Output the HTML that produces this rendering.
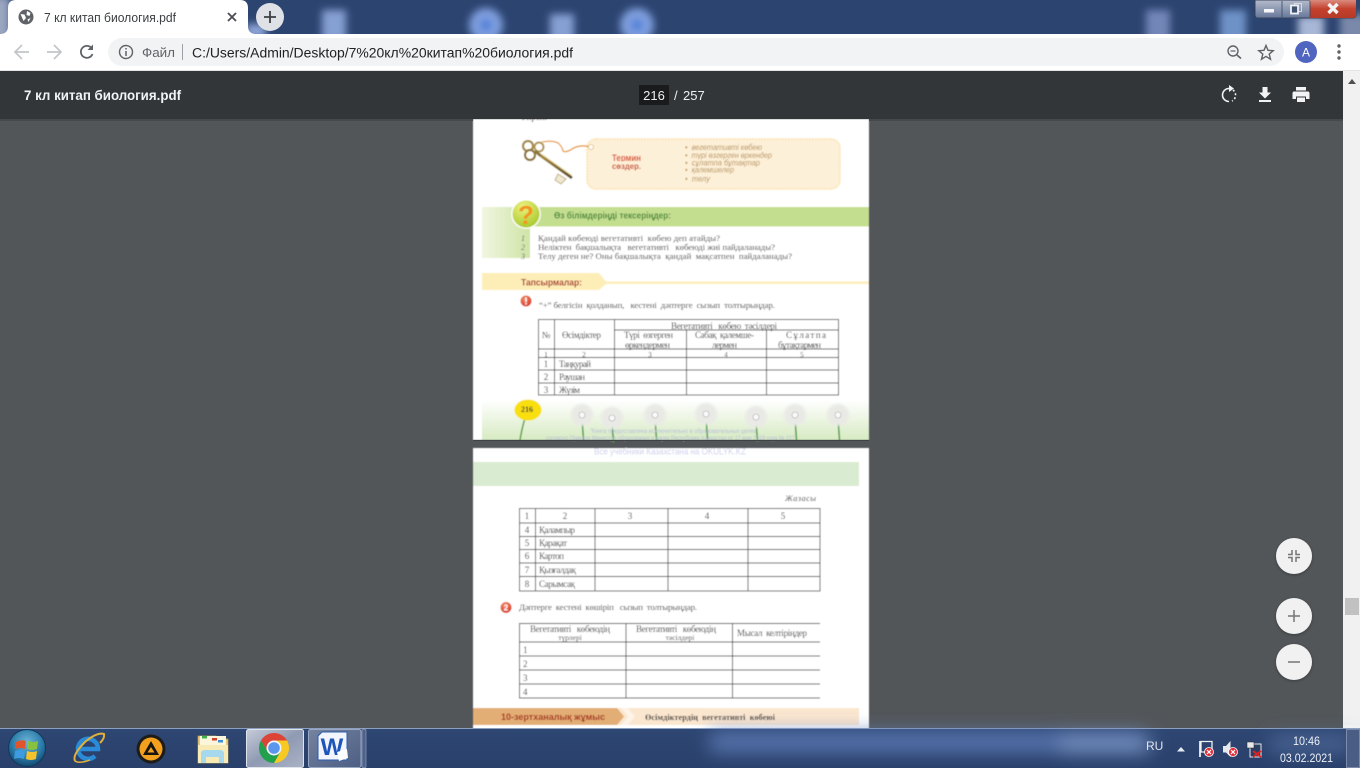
<!DOCTYPE html>
<html><head><meta charset="utf-8"><title>7 кл китап биология.pdf</title>
<style>
html,body{margin:0;padding:0;width:1360px;height:768px;overflow:hidden;background:#525659}
svg{display:block;position:absolute;left:0;top:0}
text{white-space:pre}
.ui{font-family:"Liberation Sans","DejaVu Sans",sans-serif}
.sf{font-family:"Liberation Serif","DejaVu Serif",serif;fill:#333}
.sn{font-family:"Liberation Sans","DejaVu Sans",sans-serif}
</style></head><body>
<svg width="1360" height="768" viewBox="0 0 1360 768" xmlns="http://www.w3.org/2000/svg">
<defs>
<filter id="b1" x="-5%" y="-5%" width="110%" height="110%"><feGaussianBlur stdDeviation="0.45"/></filter>
<filter id="b2" x="-30%" y="-30%" width="160%" height="160%"><feGaussianBlur stdDeviation="1.2"/></filter>
<filter id="b5" x="-30%" y="-30%" width="160%" height="160%"><feGaussianBlur stdDeviation="4"/></filter>
<filter id="b12" x="-30%" y="-100%" width="160%" height="300%"><feGaussianBlur stdDeviation="9"/></filter>
<filter id="sh" x="-30%" y="-30%" width="160%" height="160%"><feDropShadow dx="0" dy="1" stdDeviation="1.5" flood-color="#000" flood-opacity=".3"/></filter>
<linearGradient id="gl" x1="0" x2="1" y1="0" y2="0"><stop offset="0" stop-color="#f0f6e0"/><stop offset="1" stop-color="#cfe4a6"/></linearGradient>
<linearGradient id="gb" x1="0" x2="0" y1="0" y2="1"><stop offset="0" stop-color="#fff"/><stop offset="1" stop-color="#d6eac2"/></linearGradient>
<linearGradient id="tb" x1="0" x2="0" y1="0" y2="1"><stop offset="0" stop-color="#2e4672"/><stop offset="1" stop-color="#29406b"/></linearGradient>
<linearGradient id="btn" x1="0" x2="1" y1="0" y2="1"><stop offset="0" stop-color="#c5cbd8"/><stop offset=".5" stop-color="#8f9ab3"/><stop offset="1" stop-color="#aab2c5"/></linearGradient>
<linearGradient id="btn2" x1="0" x2="1" y1="0" y2="1"><stop offset="0" stop-color="#75839f"/><stop offset="1" stop-color="#4c5e84"/></linearGradient>
<linearGradient id="red" x1="0" x2="0" y1="0" y2="1"><stop offset="0" stop-color="#d98a7e"/><stop offset=".5" stop-color="#c4402c"/><stop offset="1" stop-color="#b53a28"/></linearGradient>
<linearGradient id="wc" x1="0" x2="0" y1="0" y2="1"><stop offset="0" stop-color="#b4bccb"/><stop offset="1" stop-color="#66779a"/></linearGradient>
<linearGradient id="kg" x1="0" x2="1" y1="0" y2="1"><stop offset="0" stop-color="#a8893c"/><stop offset="1" stop-color="#5c4a1e"/></linearGradient>
<radialGradient id="q" cx=".4" cy=".25" r=".85"><stop offset="0" stop-color="#eef27e"/><stop offset="1" stop-color="#a2c524"/></radialGradient>
<radialGradient id="rd" cx=".4" cy=".3" r=".8"><stop offset="0" stop-color="#f58c6a"/><stop offset="1" stop-color="#d7301c"/></radialGradient>
<radialGradient id="orb" cx=".5" cy=".35" r=".7"><stop offset="0" stop-color="#6fb5d8"/><stop offset=".6" stop-color="#2a7aa8"/><stop offset="1" stop-color="#0e3f63"/></radialGradient>
<g id="dand"><path d="M0 3 L1.500 25" stroke="#4c9a3c" stroke-width="1.500" fill="none"/><circle r="11" fill="#e9e9e6" filter="url(#b2)"/><circle r="3" fill="#fafafa" stroke="#a8a8a8" stroke-width=".6"/></g>
</defs>

<!-- viewer background -->
<rect width="1360" height="768" fill="#525659"/>

<!-- desktop title strip -->
<rect width="1360" height="34" fill="#2c4470"/>
<g filter="url(#b5)">
<rect x="322" y="10" width="24" height="32" fill="#86a0d4"/>
<circle cx="486" cy="25" r="17" fill="#7f9fde"/>
<circle cx="486" cy="25" r="6" fill="#4d7fd8"/>
<rect x="550" y="14" width="24" height="28" fill="#86a0d4"/>
<circle cx="637" cy="25" r="17" fill="#7f9fde"/>
<circle cx="637" cy="25" r="6" fill="#4d7fd8"/>
<rect x="1146" y="10" width="24" height="32" fill="#7386b8"/>
<rect x="1220" y="10" width="26" height="32" fill="#6e92c8"/>
<rect x="1298" y="16" width="26" height="28" fill="#a9b7d6"/>
<rect x="1340" y="14" width="30" height="30" fill="#7a89aa"/>
<rect x="-10" y="-4" width="20" height="44" fill="#9aa6c0"/>
<rect x="246" y="24" width="20" height="14" fill="#8ea6d8"/>
</g>

<!-- window controls -->
<path d="M1255 0V15q0 3 3 3H1353q3 0 3-3V0Z" fill="url(#wc)" stroke="#39445c" stroke-width="1"/>
<path d="M1310 0H1356V15q0 3-3 3H1310Z" fill="url(#red)"/>
<path d="M1282 1V17M1310 1V17" stroke="#3a4760" stroke-width=".8"/>
<rect x="1264" y="9" width="10" height="3.500" fill="#f4f6fa"/>
<rect x="1294.500" y="3.500" width="7" height="8" fill="none" stroke="#d6dbe4" stroke-width="1"/>
<rect x="1291" y="5.500" width="7" height="8" fill="#3f4f6e" stroke="#eef0f4" stroke-width="1.800"/>
<path d="M1328.500 4L1337.500 13M1337.500 4L1328.500 13" stroke="#f2f2f2" stroke-width="3.400"/>

<!-- tab -->
<path d="M0 34Q8 34 8 26V8Q8 0 16 0H240Q248 0 248 8V26Q248 34 256 34Z" fill="#fff"/>
<circle cx="26" cy="17" r="7.500" fill="#5f6368"/>
<path d="M20.500 14l4 .5 1.500 3.500-2.500 3zM27 11l3.500 2-1 3-3-1zM27.500 19.500l3-1.500-2 4z" fill="#fff"/>
<text class="ui" x="44" y="22" font-size="12.500" fill="#3c4043" textLength="132" lengthAdjust="spacingAndGlyphs">7 кл китап биология.pdf</text>
<path d="M228 13L236 21M236 13L228 21" stroke="#4a4d51" stroke-width="1.800"/>
<circle cx="270" cy="17" r="14" fill="#dee1e6"/>
<path d="M270 11V23M264 17H276" stroke="#3c4043" stroke-width="1.800"/>

<!-- toolbar -->
<rect y="34" width="1360" height="37" fill="#fff"/>
<path d="M22 45L15 52L22 59M15 52H29" stroke="#c3c5c8" stroke-width="1.700" fill="none"/>
<path d="M54 45L61 52L54 59M47 52H61" stroke="#c3c5c8" stroke-width="1.700" fill="none"/>
<path d="M91.500 48A6 6 0 1 0 92.500 54" stroke="#5f6368" stroke-width="1.800" fill="none"/>
<path d="M93 44.500V50H87.500Z" fill="#5f6368"/>
<rect x="108" y="38" width="1176" height="28" rx="14" fill="#f1f3f4"/>
<circle cx="126" cy="52" r="6.500" fill="none" stroke="#5f6368" stroke-width="1.400"/>
<path d="M126 51V56M126 48V49.500" stroke="#5f6368" stroke-width="1.500"/>
<text class="ui" x="142" y="57" font-size="12.500" fill="#5f6368" textLength="33" lengthAdjust="spacingAndGlyphs">Файл</text>
<rect x="182" y="44" width="1" height="16" fill="#9aa0a6"/>
<text class="ui" x="192" y="57.500" font-size="13.500" fill="#202124" textLength="381" lengthAdjust="spacingAndGlyphs">C:/Users/Admin/Desktop/7%20кл%20китап%20биология.pdf</text>
<circle cx="1233" cy="51" r="5" fill="none" stroke="#5f6368" stroke-width="1.400"/>
<path d="M1230.500 51H1235.500" stroke="#5f6368" stroke-width="1.200"/>
<path d="M1237 55L1241 58.500" stroke="#5f6368" stroke-width="1.600"/>
<path d="M1266 45.500l2 4.800 5.200.4-4 3.400 1.300 5.100-4.500-2.800-4.500 2.800 1.300-5.100-4-3.400 5.200-.4z" fill="none" stroke="#5f6368" stroke-width="1.400"/>
<circle cx="1306" cy="52" r="11" fill="#5065c0"/>
<text class="ui" x="1306" y="56.500" font-size="12" fill="#fff" text-anchor="middle">A</text>
<circle cx="1339" cy="46" r="1.700" fill="#5f6368"/><circle cx="1339" cy="52" r="1.700" fill="#5f6368"/><circle cx="1339" cy="58" r="1.700" fill="#5f6368"/>
<rect y="70" width="1360" height="1" fill="#e4e4e4"/>

<!-- scrollbar -->
<rect x="1343" y="71" width="17" height="658" fill="#f1f1f1"/>
<path d="M1348 84L1352 79L1356 84Z" fill="#505050"/>
<rect x="1345" y="598" width="14" height="17" fill="#c1c1c1"/>

<!-- PAGE 1 -->
<g filter="url(#b1)">
<rect x="473" y="119" width="396" height="321" fill="#fff"/>
<text class="sf" x="520" y="120" font-size="9" fill="#777">Үйрен.</text>
<!-- box -->
<rect x="587" y="139" width="253" height="50" rx="9" fill="#fdf0d8" stroke="#fce4b4" stroke-width="1.800" stroke-dasharray="2 1"/>
<!-- key -->
<path d="M542 142Q552 140 558 143Q562 146 563 151Q566 153 572 149Q580 144 590 147" stroke="#e9a24a" stroke-width="1.400" fill="none"/>
<circle cx="591" cy="147" r="2.500" fill="#fff" stroke="#e3b56c" stroke-width=".8"/>
<path d="M541 156L572 178" stroke="url(#kg)" stroke-width="2.800"/>
<path d="M542 154.500L572 175.500" stroke="#e7d48e" stroke-width=".8"/>
<circle cx="528" cy="146" r="5" fill="#fff" stroke="#a4883e" stroke-width="2.200"/>
<circle cx="539" cy="147" r="4.500" fill="#fff" stroke="#b0934a" stroke-width="2"/>
<circle cx="530" cy="155" r="5" fill="#fff" stroke="#8c7435" stroke-width="2.200"/>
<path d="M535 151L541 156" stroke="#8c7435" stroke-width="3"/>
<path d="M558 174L566 179L561 184L555 180Z" fill="#efe8d2" stroke="#c2b282" stroke-width="1"/>
<text class="ui" x="612" y="161" font-size="9" font-weight="700" fill="#d94a2b" textLength="29" lengthAdjust="spacingAndGlyphs">Термин</text>
<text class="ui" x="612" y="169" font-size="8.500" font-weight="700" fill="#c9492c" textLength="29" lengthAdjust="spacingAndGlyphs">сөздер.</text>
<rect x="610" y="161.500" width="34" height="2.200" fill="#fdf0d8"/>
<g class="ui" font-size="8" font-style="italic" fill="#b8935a">
<text x="685" y="150" textLength="77" lengthAdjust="spacingAndGlyphs">•  вегетативті көбею</text>
<text x="685" y="158" textLength="87" lengthAdjust="spacingAndGlyphs">•  түрі өзгерген өркендер</text>
<text x="685" y="165.500" textLength="75" lengthAdjust="spacingAndGlyphs">•  сұлатпа бұтақтар</text>
<text x="685" y="172.500" textLength="49" lengthAdjust="spacingAndGlyphs">•  қалемшелер</text>
<text x="685" y="181.500" textLength="25" lengthAdjust="spacingAndGlyphs">•  телу</text>
</g>
<!-- check section -->
<rect x="482" y="207" width="48" height="51" fill="url(#gl)"/>
<rect x="530" y="207" width="339" height="19.500" fill="#c4de90"/>
<circle cx="526" cy="214" r="15" fill="#fff" opacity=".85"/>
<circle cx="526" cy="214" r="13.500" fill="url(#q)"/>
<text class="ui" x="526" y="224" font-size="26" font-weight="700" fill="#f2941c" text-anchor="middle">?</text>
<text class="ui" x="554" y="218.500" font-size="8.800" font-weight="700" fill="#4a8a3a" textLength="117" lengthAdjust="spacingAndGlyphs">Өз білімдеріңді тексеріңдер:</text>
<g class="sf" font-size="8" font-style="italic"><text x="521" y="241" fill="#666">1</text><text x="521" y="250" fill="#666">2</text><text x="521" y="259" fill="#666">3</text></g>
<g class="sf" font-size="8.800">
<text x="538" y="241" textLength="182" lengthAdjust="spacing">Қандай көбеюді вегетативті  көбею деп атайды?</text>
<text x="538" y="250" textLength="237" lengthAdjust="spacing">Неліктен  бақшалықта   вегетативті   көбеюді жиі пайдаланады?</text>
<text x="538" y="259" textLength="254" lengthAdjust="spacing">Телу деген не? Оны бақшалықта  қандай  мақсатпен  пайдаланады?</text>
</g>
<!-- tasks -->
<path d="M482 273H599L606 281.500H869V284H606L599 290H482Z" fill="#fdeeb8"/>
<text class="ui" x="521" y="285.500" font-size="9.200" font-weight="700" fill="#a92d20" textLength="61" lengthAdjust="spacingAndGlyphs">Тапсырмалар:</text>
<circle cx="526" cy="301" r="5.500" fill="url(#rd)"/>
<rect x="525.200" y="297.500" width="1.600" height="4.500" fill="#fff"/><rect x="525.200" y="303" width="1.600" height="1.500" fill="#fff"/>
<text class="sf" x="539" y="308" font-size="8.800" textLength="236" lengthAdjust="spacing">“+” белгісін  қолданып,   кестені  дәптерге  сызып  толтырыңдар.</text>
<!-- table 1 -->
<g fill="none" stroke="#444" stroke-width=".9">
<rect x="538.500" y="319.500" width="300" height="75.500"/>
<path d="M554.500 319.500V395M614.500 319.500V395M686.500 330V395M766.500 330V395M614.500 330H838.500M538.500 349H838.500M538.500 357.500H838.500M538.500 370H838.500M538.500 383H838.500"/>
</g>
<g class="sf" font-size="9">
<text x="546" y="338" text-anchor="middle">№</text>
<text x="562" y="338" textLength="39" lengthAdjust="spacing">Өсімдіктер</text>
<text x="671" y="329" textLength="106" lengthAdjust="spacing">Вегетативті   көбею  тәсілдері</text>
<text x="624" y="338" textLength="49" lengthAdjust="spacing">Түрі  өзгерген</text>
<text x="625" y="348" textLength="45" lengthAdjust="spacing">өркендермен</text>
<text x="695" y="338" textLength="59" lengthAdjust="spacing">Сабақ  қалемше-</text>
<text x="712" y="348" textLength="25" lengthAdjust="spacing">лермен</text>
<text x="786" y="338" textLength="40" lengthAdjust="spacing">Сұлатпа</text>
<text x="778" y="348" textLength="43" lengthAdjust="spacing">бұтақтармен</text>
<text x="546" y="357" text-anchor="middle" font-size="7">1</text><text x="584" y="357" text-anchor="middle" font-size="7">2</text><text x="650" y="357" text-anchor="middle" font-size="7">3</text><text x="726" y="357" text-anchor="middle" font-size="7">4</text><text x="802" y="357" text-anchor="middle" font-size="7">5</text>
<text x="546" y="367" text-anchor="middle">1</text><text x="559" y="367" textLength="32" lengthAdjust="spacing">Таңқурай</text>
<text x="546" y="380" text-anchor="middle">2</text><text x="559" y="380" textLength="26" lengthAdjust="spacing">Раушан</text>
<text x="546" y="393" text-anchor="middle">3</text><text x="559" y="393" textLength="21" lengthAdjust="spacing">Жүзім</text>
</g>
<!-- meadow -->
<rect x="482" y="400" width="387" height="40" fill="url(#gb)"/>
<use href="#dand" x="582" y="415"/><use href="#dand" x="612" y="418"/><use href="#dand" x="655" y="415"/><use href="#dand" x="706" y="414"/><use href="#dand" x="756" y="417"/><use href="#dand" x="795" y="415"/><use href="#dand" x="838" y="415"/>
<path d="M525 418Q522 428 520 440" stroke="#5ea03c" stroke-width="1.500" fill="none"/>
<ellipse cx="528" cy="410" rx="13.500" ry="10.500" fill="#f8df10"/>
<text class="sf" x="527" y="412" font-size="8" font-weight="700" text-anchor="middle" fill="#333">216</text>
<g class="sn" font-size="6.500" fill="#b9bdd8"><text x="590" y="433" textLength="166" lengthAdjust="spacingAndGlyphs">"Книга предоставлена исключительно в образовательных целях</text><text x="546" y="440" textLength="249" lengthAdjust="spacingAndGlyphs">согласно Приказа Министра образования и науки Республики Казахстан от 17 мая 2019 года № 217</text></g>
</g>

<!-- PAGE 2 -->
<g filter="url(#b1)">
<rect x="473" y="448" width="396" height="281" fill="#fff"/>
<text class="sn" x="594" y="454.500" font-size="8.800" fill="#cdcfec" textLength="152" lengthAdjust="spacingAndGlyphs">Все учебники Казахстана на OKULYK.KZ</text>
<rect x="473" y="462" width="386" height="24" fill="#d9ebd0"/>
<text class="sf" x="785" y="501" font-size="8.500" font-style="italic" textLength="31" lengthAdjust="spacing">Жазасы</text>
<g fill="none" stroke="#444" stroke-width=".9">
<rect x="519.500" y="508.500" width="300.500" height="82.500"/>
<path d="M535.500 508.500V591M595 508.500V591M668 508.500V591M748 508.500V591M519.500 523H820M519.500 536.500H820M519.500 549.500H820M519.500 563H820M519.500 576.500H820"/>
</g>
<g class="sf" font-size="9">
<text x="527" y="519" text-anchor="middle">1</text><text x="565" y="519" text-anchor="middle">2</text><text x="630" y="519" text-anchor="middle">3</text><text x="707" y="519" text-anchor="middle">4</text><text x="783" y="519" text-anchor="middle">5</text>
<text x="527" y="533" text-anchor="middle">4</text><text x="539" y="533" textLength="36" lengthAdjust="spacing">Қалампыр</text>
<text x="527" y="546" text-anchor="middle">5</text><text x="539" y="546" textLength="28" lengthAdjust="spacing">Қарақат</text>
<text x="527" y="559" text-anchor="middle">6</text><text x="539" y="559" textLength="25" lengthAdjust="spacing">Картоп</text>
<text x="527" y="573" text-anchor="middle">7</text><text x="539" y="573" textLength="37" lengthAdjust="spacing">Қызғалдақ</text>
<text x="527" y="587" text-anchor="middle">8</text><text x="539" y="587" textLength="36" lengthAdjust="spacing">Сарымсақ</text>
</g>
<circle cx="506" cy="607.500" r="5.500" fill="url(#rd)"/>
<text class="ui" x="506" y="610.500" font-size="8" font-weight="700" text-anchor="middle" fill="#fff">2</text>
<text class="sf" x="519" y="610" font-size="8.800" textLength="178" lengthAdjust="spacing">Дәптерге  кестені  көшіріп   сызып  толтырыңдар.</text>
<g fill="none" stroke="#444" stroke-width=".9">
<path d="M820 623.500H519.500V698H820M626 623.500V698M732.500 623.500V698M519.500 642H820M519.500 656H820M519.500 670H820M519.500 684H820"/>
</g>
<g class="sf" font-size="9">
<text x="530" y="632" textLength="80" lengthAdjust="spacing">Вегетативті   көбеюдің</text>
<text x="570" y="640" text-anchor="middle" font-size="7.500">түрлері</text>
<text x="636" y="632" textLength="80" lengthAdjust="spacing">Вегетативті   көбеюдің</text>
<text x="680" y="640" text-anchor="middle" font-size="7.500">тәсілдері</text>
<text x="737" y="636" textLength="70" lengthAdjust="spacing">Мысал  келтіріңдер</text>
<text x="523" y="653">1</text><text x="523" y="667">2</text><text x="523" y="681">3</text><text x="523" y="695">4</text>
</g>
<rect x="473" y="708" width="386" height="17" fill="#fbe6cf"/>
<path d="M473 708H617L624 716.500L617 725H473Z" fill="#e2ae74"/>
<path d="M621 708H628L635 716.500L628 725H621L628 716.500Z" fill="#fdf3e6"/>
<text class="ui" x="501" y="720" font-size="9.200" font-weight="700" fill="#a8301c" textLength="104" lengthAdjust="spacingAndGlyphs">10-зертханалық жұмыс</text>
<text class="sf" x="645" y="720" font-size="8.200" font-weight="700" fill="#222" textLength="130" lengthAdjust="spacing">Өсімдіктердің  вегетативті  көбеюі</text>
</g>

<!-- PDF toolbar -->
<rect y="71" width="1343" height="48" fill="#323639"/>
<rect y="119" width="473" height="2" fill="#45494c"/><rect x="869" y="119" width="474" height="2" fill="#45494c"/>
<text class="ui" x="24" y="100" font-size="14" font-weight="700" fill="#f1f3f4" textLength="157" lengthAdjust="spacingAndGlyphs">7 кл китап биология.pdf</text>
<rect x="639" y="85" width="30" height="20" fill="#191b1c"/>
<text class="ui" x="654" y="100" font-size="13" fill="#f1f1f1" text-anchor="middle">216</text>
<text class="ui" x="674" y="100" font-size="13" fill="#f1f1f1">/</text>
<text class="ui" x="683" y="100" font-size="13" fill="#f1f1f1">257</text>
<path d="M1229 88.500A6.500 6.500 0 0 0 1229 101.500" stroke="#f1f3f4" stroke-width="1.600" fill="none"/>
<path d="M1229 85L1234 88.500L1229 92Z" fill="#f1f3f4"/>
<path d="M1233 90A6.500 6.500 0 0 1 1232 101" stroke="#f1f3f4" stroke-width="1.600" stroke-dasharray="2 2" fill="none"/>
<path d="M1262.500 87H1267.500V92.500H1271L1265 98.500L1259 92.500H1262.500ZM1259 100H1271V102H1259Z" fill="#f1f3f4"/>
<path d="M1296 87H1306V90.500H1296ZM1294 91.500H1308Q1309.500 91.500 1309.500 93.500V99H1306V96.500H1296V99H1292.500V93.500Q1292.500 91.500 1294 91.500ZM1297 97.500H1305V102H1297Z" fill="#f1f3f4"/>

<rect x="473" y="440" width="396" height="1" fill="#3f4244"/>

<!-- zoom buttons -->
<g filter="url(#sh)"><circle cx="1294" cy="556" r="18" fill="#f1f1f1"/><circle cx="1294" cy="616" r="18" fill="#f1f1f1"/><circle cx="1294" cy="662" r="18" fill="#f1f1f1"/></g>
<path d="M1292 550V554.500H1288M1296 550V554.500H1300M1292 562V557.500H1288M1296 562V557.500H1300" fill="none" stroke="#757575" stroke-width="1.500"/>
<path d="M1294 610V622M1288 616H1300" stroke="#757575" stroke-width="1.500"/>
<path d="M1288 662H1300" stroke="#757575" stroke-width="1.500"/>

<!-- taskbar -->
<rect y="729" width="1360" height="39" fill="url(#tb)"/>
<rect y="728" width="1360" height="1" fill="#8ea0c2"/>
<g filter="url(#b12)">
<rect x="710" y="732" width="430" height="20" fill="#5d7db8" opacity=".85"/>
<rect x="1060" y="735" width="90" height="18" fill="#7d98c8" opacity=".8"/>
<rect x="1270" y="735" width="80" height="18" fill="#5a76a8" opacity=".6"/>
</g>
<!-- start orb -->
<circle cx="27" cy="748" r="18.500" fill="url(#orb)" stroke="#103a5c" stroke-width="1"/>
<path d="M16 742Q21 739 26 741L25 749Q20 747 15 749Z" fill="#e2552c"/>
<path d="M28 741Q33 743 38 741L37 749Q32 751 27 749Z" fill="#86c240"/>
<path d="M15 751Q20 749 25 751L24 759Q19 757 14 759Z" fill="#3d9be0"/>
<path d="M27 751Q32 753 37 751L36 759Q31 761 26 759Z" fill="#f4c32c"/>
<!-- IE -->
<path d="M79 749H98A10 10 0 1 0 95 756" fill="none" stroke="#2a8bd8" stroke-width="4.500"/>
<path d="M75 761Q72 755 85 742Q97 732 104 734Q105 738 100 743" fill="none" stroke="#e3b13a" stroke-width="2"/>
<path d="M75 761Q79 764 90 760" fill="none" stroke="#e3b13a" stroke-width="1.500"/>
<!-- AIMP -->
<circle cx="151" cy="749" r="14.500" fill="#1d1c18"/>
<circle cx="151" cy="749" r="11.500" fill="#f2a01e"/>
<path d="M151 741L159 755H143ZM151 747L147.500 752.500H154.500Z" fill="#171510" fill-rule="evenodd"/>
<!-- Folder -->
<path d="M198 736H216L219 739H228V763H198Z" fill="#e8cc78" stroke="#b89c50" stroke-width=".7"/>
<rect x="200" y="736" width="26" height="9" fill="#fbf5dc"/>
<rect x="202" y="736" width="5" height="2.500" fill="#3fb04a"/><rect x="212" y="738" width="5" height="2.500" fill="#d0402c"/><rect x="218" y="740" width="5" height="2.500" fill="#3a90d8"/>
<rect x="198" y="745" width="30" height="18" fill="#f7eab4"/>
<path d="M201 763V754Q201 750 205 750H220Q224 750 224 754V763H219V757H206V763Z" fill="#a6d8ee"/>
<!-- Chrome button -->
<rect x="246.500" y="729.500" width="57" height="38" rx="2" fill="url(#btn)" stroke="#dfe3ea" stroke-width="1"/>
<path d="M261 740.500A15 15 0 0 1 287 740.500H274A7.500 7.500 0 0 0 267.500 751.500Z" fill="#dc4437"/>
<path d="M287 740.500A15 15 0 0 1 274 763L280.500 751.500A7.500 7.500 0 0 0 274 740.500Z" fill="#f9c923"/>
<path d="M267.500 751.500A7.500 7.500 0 0 0 280.500 751.500L274 763A15 15 0 0 1 261 740.500Z" fill="#22a04c"/>
<circle cx="274" cy="748" r="7.500" fill="#f2f4f8"/><circle cx="274" cy="748" r="5.800" fill="#5a96ee"/>
<!-- Word button -->
<rect x="308.500" y="729.500" width="52.500" height="38" rx="2" fill="url(#btn2)" stroke="#9aa8c2" stroke-width="1"/>
<rect x="362" y="729.500" width="4" height="38" rx="1" fill="#4f6188" stroke="#8a9abb" stroke-width=".7"/>
<path d="M322 732H347V760H318V736Z" fill="#f2f6fc" stroke="#2a5cb0" stroke-width="1"/>
<text x="332" y="755" text-anchor="middle" font-family="'Liberation Sans',sans-serif" font-size="24" font-weight="700" fill="#1d55b8">W</text>
<path d="M337 752L347 749L348 758L339 761Z" fill="#fff"/>
<!-- tray -->
<text class="ui" x="1146" y="750" font-size="12" fill="#dfe5ee">RU</text>
<path d="M1177 751.500L1181 747L1185 751.500Z" fill="#e8ecf3"/>
<path d="M1200 741V757" stroke="#f0f0f0" stroke-width="1.800"/>
<path d="M1201 741.500H1212V752H1201Z" fill="none" stroke="#f0f0f0" stroke-width="1.300"/>
<circle cx="1209" cy="752" r="4.500" fill="#e0303c" stroke="#fff" stroke-width=".8"/><path d="M1207 750L1211 754M1211 750L1207 754" stroke="#fff" stroke-width="1.200"/>
<path d="M1223 746H1226L1230.500 741V757L1226 752.500H1223Z" fill="#e4e8ee"/>
<circle cx="1233" cy="752" r="4.500" fill="#e0303c" stroke="#fff" stroke-width=".8"/><path d="M1231 750L1235 754M1235 750L1231 754" stroke="#fff" stroke-width="1.200"/>
<rect x="1250" y="744" width="11" height="13" fill="#2c3f63" stroke="#e4e8ee" stroke-width="1"/>
<rect x="1247" y="742" width="7" height="6" fill="#e8e8e8" stroke="#222" stroke-width=".5"/>
<path d="M1253 751L1261 757M1261 751L1253 757" stroke="#e32020" stroke-width="1.800"/>
<text class="ui" x="1293" y="745" font-size="12" fill="#eef1f6" textLength="27" lengthAdjust="spacingAndGlyphs">10:46</text>
<text class="ui" x="1280" y="762" font-size="12" fill="#eef1f6" textLength="53" lengthAdjust="spacingAndGlyphs">03.02.2021</text>
<rect x="1346.500" y="729.500" width="13" height="38" fill="#4a5d84" stroke="#8c9ab6" stroke-width=".8"/>
<rect x="1343" y="725" width="17" height="3" fill="#f1f1f1"/>
</svg>
</body></html>
